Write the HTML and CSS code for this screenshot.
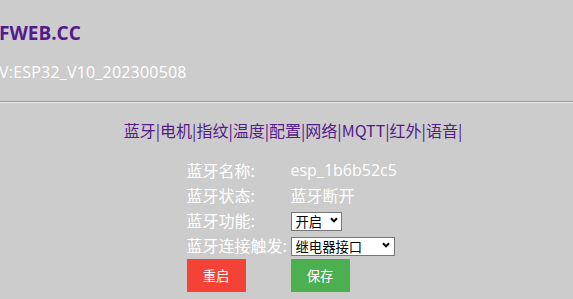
FILE: index.html
```html
<!DOCTYPE html>
<html lang="zh-CN">
<head>
<meta charset="utf-8">
<title>FWEB.CC</title>
<link rel="stylesheet" href="styles.css">
</head>
<body>
<header class="head">
  <div class="title">FWEB.CC</div>
  <div class="version">V:ESP32_V10_202300508</div>
</header>
<hr class="rule">
<main class="main">
  <nav class="nav"><a href="#">蓝牙|</a><a href="#">电机|</a><a href="#">指纹|</a><a href="#">温度|</a><a href="#">配置|</a><a href="#">网络|</a><a href="#">MQTT|</a><a href="#">红外|</a><a href="#">语音|</a></nav>
  <div class="form">
    <div class="label">蓝牙名称:</div><div class="value">esp_1b6b52c5</div>
    <div class="label">蓝牙状态:</div><div class="value">蓝牙断开</div>
    <div class="label">蓝牙功能:</div>
    <div class="value"><span class="sel sel-s"><select><option>开启</option><option>关闭</option></select><svg class="chev" viewBox="0 0 8 6" width="8" height="6"><path d="M1 1.2 L4 4.4 L7 1.2" fill="none" stroke="#000" stroke-width="2"/></svg></span></div>
    <div class="label">蓝牙连接触发:</div>
    <div class="value"><span class="sel sel-l"><select><option>继电器接口</option></select><svg class="chev" viewBox="0 0 8 6" width="8" height="6"><path d="M1 1.2 L4 4.4 L7 1.2" fill="none" stroke="#000" stroke-width="2"/></svg></span></div>
    <div class="btn-cell"><button class="btn btn-red">重启</button></div>
    <div class="btn-cell"><button class="btn btn-green">保存</button></div>
  </div>
</main>
</body>
</html>
```
FILE: styles.css
```css
html, body {
  margin: 0;
  padding: 0;
  background: #cccccc;
}
body {
  font-family: "Open Sans", "Noto Sans CJK SC", sans-serif;
  color: #ffffff;
  width: 573px;
  height: 299px;
  overflow: hidden;
}
.head {
  padding-top: 21px;
}
.title {
  font-size: 19px;
  font-weight: 700;
  line-height: 24px;
  color: #551a8b;
  margin-left: -1px;
}
.version {
  font-size: 16px;
  letter-spacing: 0.2px;
  line-height: 24px;
  margin-top: 15px;
  margin-left: -1px;
}
.rule {
  margin: 17px 0 0 0;
  height: 0;
  border: 0;
  border-top: 1px solid #9a9a9a;
  border-bottom: 1px solid #eeeeee;
}
.main {
  padding-left: 13px;
}
.nav {
  margin-top: 15px;
  text-align: center;
  font-size: 16px;
  line-height: 24px;
  font-family: "Noto Sans CJK SC", "Open Sans", sans-serif;
}
.nav a {
  color: #551a8b;
  text-decoration: none;
}
.form {
  margin-top: 16px;
  display: grid;
  grid-template-columns: 104px 109px;
  grid-template-rows: 24px 25px 25px 25px 33px;
  row-gap: 0;
  justify-content: center;
  font-size: 16px;
  font-family: "Noto Sans CJK SC", sans-serif;
}
.label, .value {
  display: flex;
  align-items: center;
  white-space: nowrap;
}
.value {
  font-family: "Open Sans", "Noto Sans CJK SC", sans-serif;
}
.btn-cell {
  padding-top: 2px;
}
.sel {
  position: relative;
  display: inline-block;
  height: 19px;
}
.sel select {
  -webkit-appearance: none;
  appearance: none;
  height: 19px;
  margin: 0;
  padding: 0 0 0 4px;
  border: 1px solid #767676;
  border-radius: 0;
  background: #ffffff;
  color: #000000;
  font-family: "Noto Sans CJK SC", sans-serif;
  font-size: 13.33px;
  line-height: 17px;
  box-sizing: border-box;
  outline: none;
}
.sel-s select { width: 51px; }
.sel-l select { width: 104px; }
.chev {
  position: absolute;
  top: 6.5px;
  pointer-events: none;
}
.sel-s .chev { left: 39px; }
.sel-l .chev { left: 91px; }
.btn {
  width: 59px;
  height: 33px;
  border: 0;
  margin: 0;
  padding: 0;
  color: #ffffff;
  font-size: 13.33px;
  font-family: "Noto Sans CJK SC", sans-serif;
  display: block;
}
.btn-red { background: #f44336; }
.btn-green { background: #4caf50; }
```
